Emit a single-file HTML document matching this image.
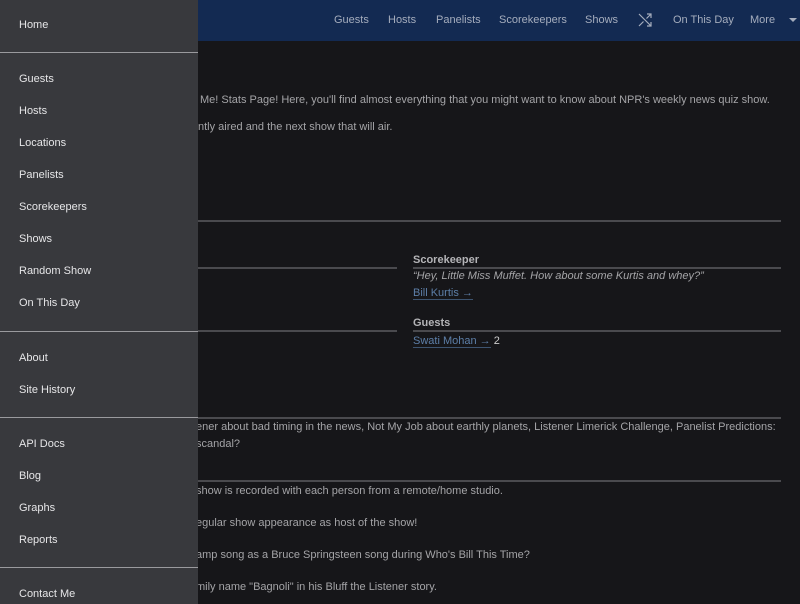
<!DOCTYPE html>
<html><head><meta charset="utf-8"><style>
*{margin:0;padding:0;box-sizing:border-box}
body{width:800px;height:604px;overflow:hidden;background:#161619;font-family:"Liberation Sans",sans-serif;position:relative;color:#a9a9ab;font-size:11px}
.hdr{position:absolute;left:0;top:0;width:800px;height:41px;background:#132a52}
.nav{position:absolute;top:14px;color:#a5adbd;font-size:11px;white-space:nowrap}
.side{position:absolute;left:0;top:0;width:198px;height:604px;background:#38393d;z-index:5}
.side a{position:absolute;left:19px;color:#e6e6e8;font-size:11px;text-decoration:none;white-space:nowrap}
.side .d{position:absolute;left:0;width:198px;height:1px;background:#9a9a9e}
.t{position:absolute;white-space:nowrap;font-size:11px;color:#a4a4a7}
.l{position:absolute;height:2px;background:#4a4a4e}
.lk{color:#5d7fa8;border-bottom:1px solid #3d5470}
b{color:#b4b4b7}
</style></head><body>
<div class="hdr"></div>
<div class="nav" style="left:334px">Guests</div>
<div class="nav" style="left:388px">Hosts</div>
<div class="nav" style="left:436px">Panelists</div>
<div class="nav" style="left:499px">Scorekeepers</div>
<div class="nav" style="left:585px">Shows</div>
<svg style="position:absolute;left:638px;top:13px" width="14" height="14" viewBox="0 0 14 14" fill="none" stroke="#a5adbd" stroke-width="1.2"><path d="M1 1l12 12M1 13l4.5-4.5M8.5 5.5L13 1M9 1h4v4M9 13h4V9"/></svg>
<div class="nav" style="left:673px">On This Day</div>
<div class="nav" style="left:750px">More</div>
<div style="position:absolute;left:789px;top:18px;border:4px solid transparent;border-top:4px solid #a5adbd"></div>

<div class="t" style="left:200px;top:94px">Me! Stats Page! Here, you'll find almost everything that you might want to know about NPR's weekly news quiz show.</div>
<div class="t" style="left:198px;top:121px">ntly aired and the next show that will air.</div>
<div class="l" style="left:198px;top:220px;width:583px"></div>
<div class="l" style="left:198px;top:267px;width:199px"></div>
<div class="l" style="left:413px;top:267px;width:368px"></div>
<div class="t" style="left:413px;top:254px"><b>Scorekeeper</b></div>
<div class="t" style="left:413px;top:270px;font-style:italic">“Hey, Little Miss Muffet. How about some Kurtis and whey?”</div>
<div class="t" style="left:413px;top:287px"><span class="lk">Bill Kurtis →</span></div>
<div class="l" style="left:198px;top:330px;width:199px"></div>
<div class="l" style="left:413px;top:330px;width:368px"></div>
<div class="t" style="left:413px;top:317px"><b>Guests</b></div>
<div class="t" style="left:413px;top:335px"><span class="lk">Swati Mohan →</span> <span style="color:#ccc">2</span></div>
<div class="l" style="left:198px;top:417px;width:583px"></div>
<div class="t" style="left:196px;top:421px">ener about bad timing in the news, Not My Job about earthly planets, Listener Limerick Challenge, Panelist Predictions:</div>
<div class="t" style="left:196px;top:438px">scandal?</div>
<div class="l" style="left:198px;top:480px;width:583px"></div>
<div class="t" style="left:196px;top:485px">show is recorded with each person from a remote/home studio.</div>
<div class="t" style="left:196px;top:517px">egular show appearance as host of the show!</div>
<div class="t" style="left:196px;top:549px">amp song as a Bruce Springsteen song during Who's Bill This Time?</div>
<div class="t" style="left:196px;top:581px">mily name "Bagnoli" in his Bluff the Listener story.</div>

<div class="side">
<a style="top:19px">Home</a>
<div class="d" style="top:52px"></div>
<a style="top:73px">Guests</a>
<a style="top:105px">Hosts</a>
<a style="top:137px">Locations</a>
<a style="top:169px">Panelists</a>
<a style="top:201px">Scorekeepers</a>
<a style="top:233px">Shows</a>
<a style="top:265px">Random Show</a>
<a style="top:297px">On This Day</a>
<div class="d" style="top:331px"></div>
<a style="top:352px">About</a>
<a style="top:384px">Site History</a>
<div class="d" style="top:417px"></div>
<a style="top:438px">API Docs</a>
<a style="top:470px">Blog</a>
<a style="top:502px">Graphs</a>
<a style="top:534px">Reports</a>
<div class="d" style="top:567px"></div>
<a style="top:588px">Contact Me</a>
</div>
</body></html>
